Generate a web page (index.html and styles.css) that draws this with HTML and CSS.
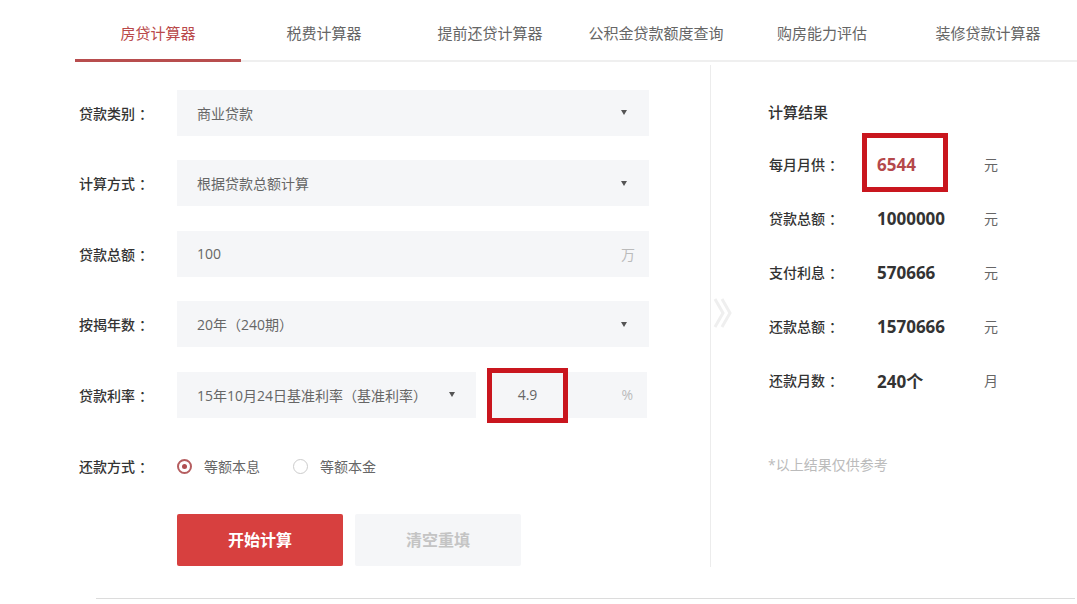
FILE: index.html
```html
<!DOCTYPE html>
<html lang="zh-CN">
<head>
<meta charset="utf-8">
<title>房贷计算器</title>
<link rel="stylesheet" href="styles.css">
</head>
<body>
<div class="tabs">
  <div class="tab active">房贷计算器</div>
  <div class="tab">税费计算器</div>
  <div class="tab">提前还贷计算器</div>
  <div class="tab">公积金贷款额度查询</div>
  <div class="tab">购房能力评估</div>
  <div class="tab">装修贷款计算器</div>
</div>
<div class="main">
  <div class="form">
    <div class="row">
      <span class="label">贷款类别<span class="colon">：</span></span>
      <div class="field select"><span class="text">商业贷款</span><i class="arrow"></i></div>
    </div>
    <div class="row">
      <span class="label">计算方式<span class="colon">：</span></span>
      <div class="field select"><span class="text">根据贷款总额计算</span><i class="arrow"></i></div>
    </div>
    <div class="row">
      <span class="label">贷款总额<span class="colon">：</span></span>
      <div class="field"><span class="text">100</span><span class="unit">万</span></div>
    </div>
    <div class="row">
      <span class="label">按揭年数<span class="colon">：</span></span>
      <div class="field select"><span class="text">20年（240期）</span><i class="arrow"></i></div>
    </div>
    <div class="row">
      <span class="label">贷款利率<span class="colon">：</span></span>
      <div class="field select rate"><span class="text">15年10月24日基准利率（基准利率）</span><i class="arrow"></i></div>
      <div class="field rate-input"><span class="val">4.9<span class="mark"></span></span><span class="unit">%</span></div>
    </div>
    <div class="row radio-row">
      <span class="label">还款方式<span class="colon">：</span></span>
      <span class="radio checked"></span><span class="radio-text">等额本息</span>
      <span class="radio"></span><span class="radio-text">等额本金</span>
    </div>
    <div class="buttons">
      <div class="btn primary">开始计算</div>
      <div class="btn secondary">清空重填</div>
    </div>
  </div>
  <div class="result">
    <svg class="chev" width="22" height="36" viewBox="0 0 22 36"><path d="M3 4 L11 18 L3 32 M10 4 L18 18 L10 32" fill="none" stroke="#efefef" stroke-width="3"/></svg>
    <div class="title">计算结果</div>
    <div class="res-row"><span class="rlabel">每月月供<span class="colon">：</span></span><span class="rval red">6544<span class="mark"></span></span><span class="runit">元</span></div>
    <div class="res-row"><span class="rlabel">贷款总额<span class="colon">：</span></span><span class="rval">1000000</span><span class="runit">元</span></div>
    <div class="res-row"><span class="rlabel">支付利息<span class="colon">：</span></span><span class="rval">570666</span><span class="runit">元</span></div>
    <div class="res-row"><span class="rlabel">还款总额<span class="colon">：</span></span><span class="rval">1570666</span><span class="runit">元</span></div>
    <div class="res-row"><span class="rlabel">还款月数<span class="colon">：</span></span><span class="rval">240个</span><span class="runit">月</span></div>
    <div class="note">*以上结果仅供参考</div>
  </div>
</div>
<div class="footline"></div>
</body>
</html>
```
FILE: styles.css
```css
* { box-sizing: border-box; }
body {
  margin: 0;
  background: #fff;
  font-family: "Open Sans", "Noto Sans CJK SC", sans-serif;
  font-size: 14px;
  color: #333;
  width: 1077px;
  height: 604px;
  overflow: hidden;
}
.tabs {
  display: flex;
  margin-left: 75px;
  border-bottom: 2px solid #efefef;
}
.tab {
  width: 166px;
  height: 60px;
  line-height: 62px;
  text-align: center;
  font-size: 15px;
  color: #666;
  border-bottom: 3px solid transparent;
  margin-bottom: -2px;
  margin-top: 2px;
}
.tab.active {
  color: #b9494a;
  border-bottom-color: #b84d4e;
}
.main {
  display: flex;
}
.form {
  width: 635px;
  margin-left: 75px;
  padding-top: 27.5px;
  padding-left: 4px;
}
.row {
  display: flex;
  align-items: center;
  height: 46px;
  margin-bottom: 24.5px;
}
.label {
  width: 98px;
  flex: none;
  font-weight: 500;
  color: #333;
}
.colon {
  display: inline-block;
  padding-left: 4px;
}
.field {
  display: flex;
  align-items: center;
  height: 46px;
  width: 472px;
  background: #f5f6f8;
  padding: 0 14px 0 20px;
  color: #666;
}
.field .text { flex: 1; }
.arrow {
  width: 0;
  height: 0;
  border-left: 3.5px solid transparent;
  border-right: 3.5px solid transparent;
  border-top: 5px solid #555;
  margin-right: 8px;
}
.unit { color: #bbb; }
.field.rate { width: 299px; }
.field.rate .arrow { margin-right: 7px; }
.rate-input {
  width: 160px;
  margin-left: 11px;
  padding: 0 14px 0 0;
}
.rate-input .val {
  position: relative;
  width: 81px;
  height: 46px;
  line-height: 46px;
  text-align: center;
  color: #666;
}
.rate-input .unit { margin-left: auto; }
.mark {
  position: absolute;
  border: 5px solid #c9161e;
}
.rate-input .mark {
  left: 0;
  right: 0;
  top: -4px;
  bottom: -5px;
}
.radio-row {
  margin-top: 25.5px;
  margin-bottom: 25px;
}
.radio {
  width: 15px;
  height: 15px;
  border-radius: 50%;
  border: 1.5px solid #ccc;
  display: flex;
  align-items: center;
  justify-content: center;
  flex: none;
}
.radio.checked { border: 2px solid #b55d5f; }
.radio.checked::after {
  content: "";
  width: 5px;
  height: 5px;
  border-radius: 50%;
  background: #b04e51;
}
.radio-text {
  margin-left: 12px;
  margin-right: 33px;
  color: #666;
}
.buttons {
  display: flex;
  gap: 12px;
  padding-left: 98px;
}
.btn {
  width: 166px;
  height: 52px;
  line-height: 52px;
  text-align: center;
  font-size: 16px;
  font-weight: 700;
  border-radius: 2px;
}
.btn.primary { background: #d7403f; color: #fff; }
.btn.secondary { background: #f5f6f8; color: #c4c4c4; }
.result {
  position: relative;
  margin-top: 3px;
  height: 502px;
  border-left: 1px solid #ececec;
  padding-left: 57px;
  padding-top: 37px;
  flex: 1;
}
.chev {
  position: absolute;
  left: 1px;
  top: 230px;
}
.title {
  font-size: 15px;
  line-height: 20px;
  font-weight: 500;
  margin-bottom: 15px;
}
.res-row {
  display: flex;
  align-items: center;
  height: 54px;
}
.rlabel {
  width: 109px;
  font-weight: 500;
  padding-left: 1px;
}
.rval {
  position: relative;
  width: 107px;
  font-size: 17px;
  font-weight: 700;
  color: #333;
}
.rval.red { color: #b5484b; }
.rval .mark {
  left: -15px;
  top: -20px;
  width: 86px;
  height: 59px;
}
.runit { color: #666; }
.note {
  margin-top: 48px;
  line-height: 20px;
  color: #bbb;
  font-size: 14px;
}
.footline {
  margin: 31px 2px 0 96px;
  border-top: 1px solid #dcdcdc;
}
```
